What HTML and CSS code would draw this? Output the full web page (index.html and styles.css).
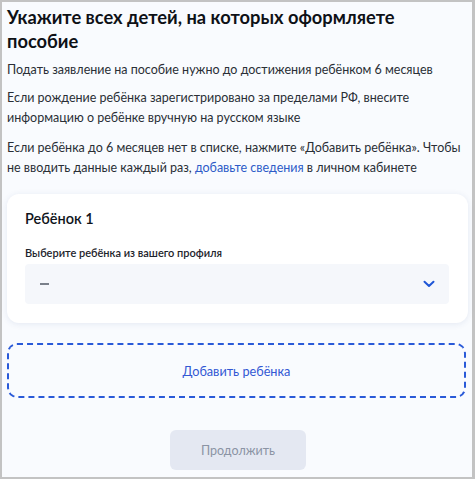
FILE: index.html
```html
<!DOCTYPE html>
<html lang="ru">
<head>
<meta charset="utf-8">
<link rel="stylesheet" href="styles.css">
</head>
<body>
<div class="frame">
  <h1 class="title">Укажите всех детей, на которых оформляете пособие</h1>
  <p class="text t1">Подать заявление на пособие нужно до достижения ребёнком 6 месяцев</p>
  <p class="text t2">Если рождение ребёнка зарегистрировано за пределами РФ, внесите информацию о ребёнке вручную на русском языке</p>
  <p class="text t3">Если ребёнка до 6 месяцев нет в списке, нажмите «Добавить ребёнка». Чтобы не вводить данные каждый раз, <a class="link" href="#">добавьте сведения</a> в личном кабинете</p>

  <section class="card">
    <h2 class="card-title">Ребёнок 1</h2>
    <div class="label">Выберите ребёнка из вашего профиля</div>
    <div class="select">
      <span class="dash"></span>
      <svg class="chevron" width="12" height="8" viewBox="0 0 12 8"><path d="M1.5 1.8 L6 6 L10.5 1.8" fill="none" stroke="#1f56d6" stroke-width="2" stroke-linecap="round" stroke-linejoin="round"/></svg>
    </div>
  </section>

  <div class="add">Добавить ребёнка</div>

  <div class="actions">
    <button class="btn" disabled>Продолжить</button>
  </div>
</div>
</body>
</html>
```

FILE: styles.css
```css
html, body {
  margin: 0;
  padding: 0;
}
body {
  width: 475px;
  height: 479px;
  overflow: hidden;
  font-family: Lato, "Noto Sans", sans-serif;
  color: #1f2530;
}
.frame {
  box-sizing: border-box;
  width: 475px;
  height: 479px;
  border-style: solid;
  border-color: #c3c3c3;
  border-width: 2px 3px 2px 2px;
  background: #f9fbfe;
  padding: 3px 4px 0 5px;
  display: flex;
  flex-direction: column;
}
.title {
  margin: 0;
  font-size: 18.3px;
  line-height: 24px;
  font-weight: 700;
  color: #0e1116;
}
.text {
  margin: 0;
  font-size: 12.5px;
  line-height: 19.5px;
  color: #2a2f36;
}
.t1 { margin-top: 7px; }
.t2 { margin-top: 8.5px; }
.t3 { margin-top: 11px; }
.link {
  color: #2d5bc8;
  text-decoration: none;
}
.card {
  margin-top: 17px;
  background: #ffffff;
  border-radius: 12px;
  box-shadow: 0 1px 6px rgba(40, 70, 140, 0.10);
  padding: 15px 19px 19px 18px;
}
.card-title {
  margin: 0;
  font-size: 14.5px;
  line-height: 20px;
  font-weight: 600;
  color: #0f141b;
}
.label {
  margin-top: 16px;
  font-size: 11px;
  line-height: 16px;
  font-weight: 600;
  color: #1d232b;
}
.select {
  margin-top: 3px;
  height: 40px;
  background: #f5f7fb;
  border-radius: 4px;
  display: flex;
  align-items: center;
  justify-content: space-between;
  padding: 0 14px 0 15px;
}
.dash {
  width: 9px;
  height: 1.5px;
  background: #7a808a;
}
.chevron {
  display: block;
}
.add {
  margin-top: 20px;
  margin-right: 2px;
  height: 55px;
  box-sizing: border-box;
  border: 2px dashed #2a5ad8;
  border-radius: 10px;
  display: flex;
  align-items: center;
  justify-content: center;
  font-size: 12.7px;
  color: #3358d4;
}
.actions {
  display: flex;
  justify-content: center;
  margin-top: 32px;
  padding-left: 1px;
}
.btn {
  width: 136px;
  height: 40px;
  border: none;
  border-radius: 6px;
  background: #e4e8f2;
  color: #8b94a4;
  font-family: Lato, "Noto Sans", sans-serif;
  font-size: 12.5px;
  padding: 0;
}
```
